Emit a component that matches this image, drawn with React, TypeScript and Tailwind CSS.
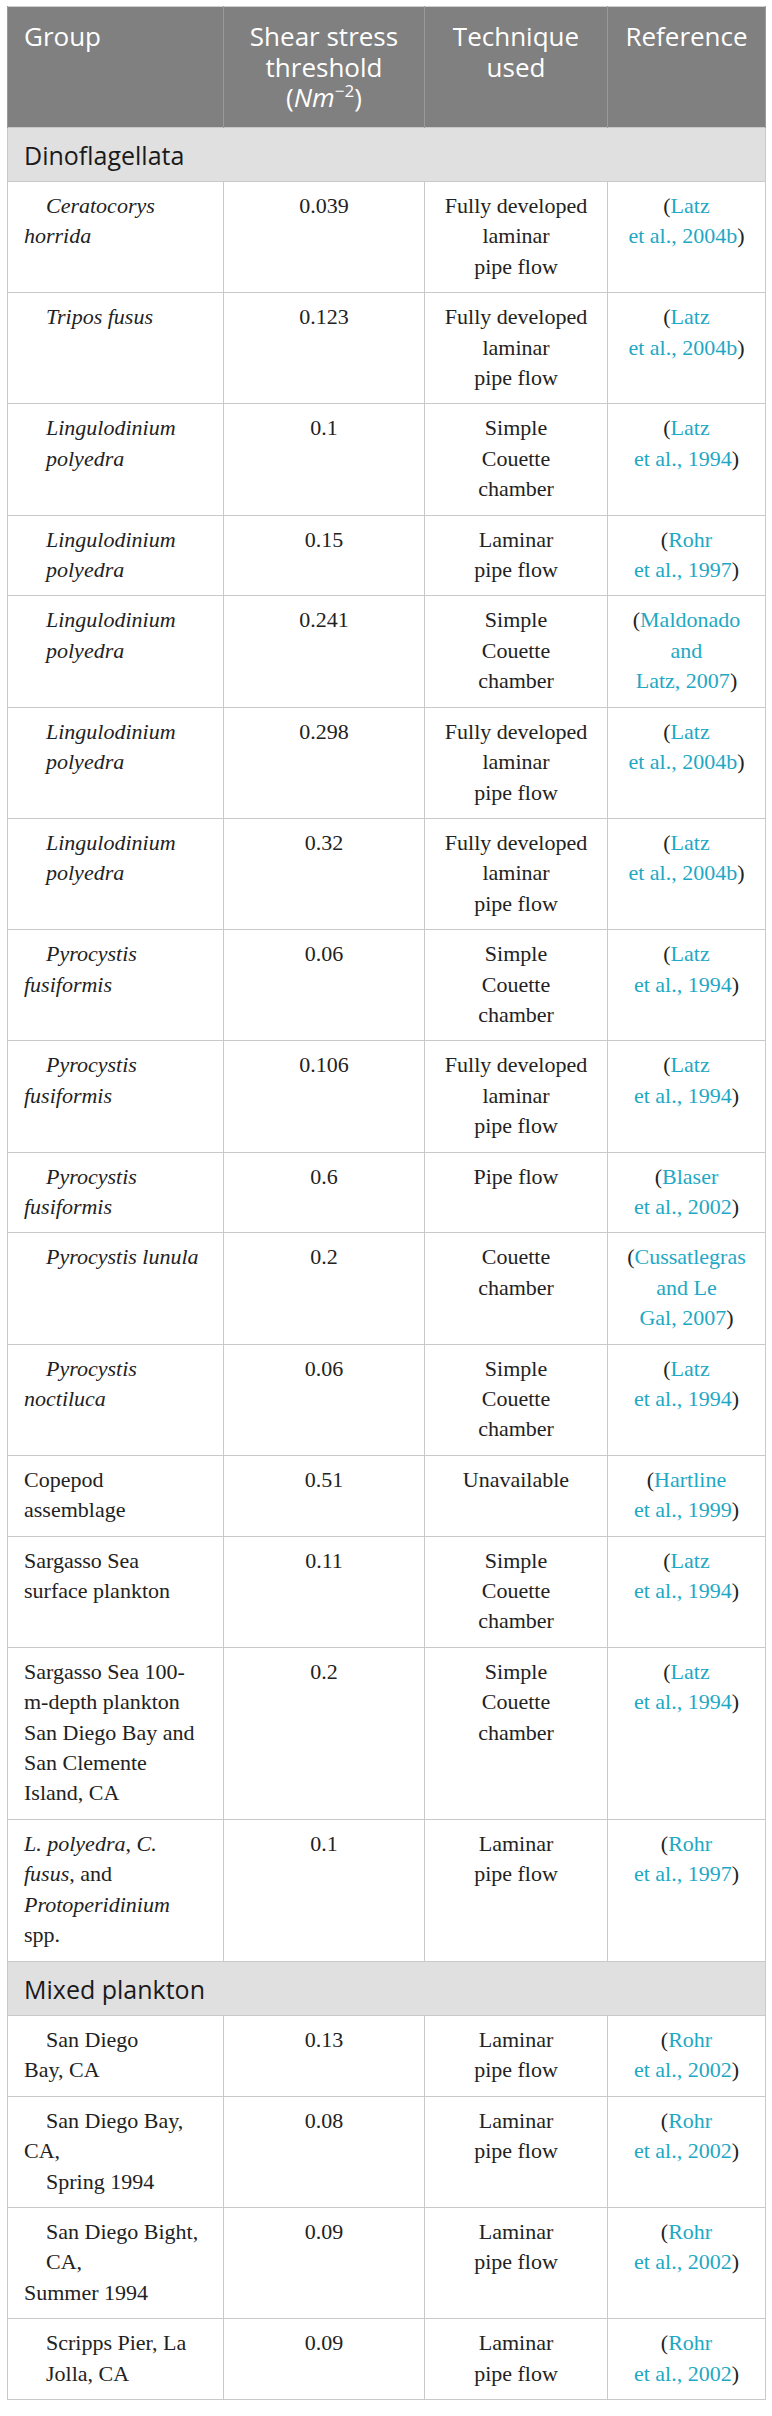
type Row = {
  group: React.ReactNode[];
  italic?: boolean;
  value: string;
  tech: string[];
  ref: string[];
};

const FDLPF = ["Fully developed", "laminar", "pipe flow"];
const SCC = ["Simple", "Couette", "chamber"];
const LPF = ["Laminar", "pipe flow"];
const LATZ04 = ["Latz", "et al., 2004b"];
const LATZ94 = ["Latz", "et al., 1994"];
const ROHR97 = ["Rohr", "et al., 1997"];
const ROHR02 = ["Rohr", "et al., 2002"];

// lines starting with ">" get the first-line indent
const dino: Row[] = [
  { group: [">Ceratocorys", "horrida"], italic: true, value: "0.039", tech: FDLPF, ref: LATZ04 },
  { group: [">Tripos fusus"], italic: true, value: "0.123", tech: FDLPF, ref: LATZ04 },
  { group: [">Lingulodinium", ">polyedra"], italic: true, value: "0.1", tech: SCC, ref: LATZ94 },
  { group: [">Lingulodinium", ">polyedra"], italic: true, value: "0.15", tech: LPF, ref: ROHR97 },
  { group: [">Lingulodinium", ">polyedra"], italic: true, value: "0.241", tech: SCC, ref: ["Maldonado", "and", "Latz, 2007"] },
  { group: [">Lingulodinium", ">polyedra"], italic: true, value: "0.298", tech: FDLPF, ref: LATZ04 },
  { group: [">Lingulodinium", ">polyedra"], italic: true, value: "0.32", tech: FDLPF, ref: LATZ04 },
  { group: [">Pyrocystis", "fusiformis"], italic: true, value: "0.06", tech: SCC, ref: LATZ94 },
  { group: [">Pyrocystis", "fusiformis"], italic: true, value: "0.106", tech: FDLPF, ref: LATZ94 },
  { group: [">Pyrocystis", "fusiformis"], italic: true, value: "0.6", tech: ["Pipe flow"], ref: ["Blaser", "et al., 2002"] },
  { group: [">Pyrocystis lunula"], italic: true, value: "0.2", tech: ["Couette", "chamber"], ref: ["Cussatlegras", "and Le", "Gal, 2007"] },
  { group: [">Pyrocystis", "noctiluca"], italic: true, value: "0.06", tech: SCC, ref: LATZ94 },
  { group: ["Copepod", "assemblage"], value: "0.51", tech: ["Unavailable"], ref: ["Hartline", "et al., 1999"] },
  { group: ["Sargasso Sea", "surface plankton"], value: "0.11", tech: SCC, ref: LATZ94 },
  {
    group: ["Sargasso Sea 100-", "m-depth plankton", "San Diego Bay and", "San Clemente", "Island, CA"],
    value: "0.2",
    tech: SCC,
    ref: LATZ94,
  },
  {
    group: [
      <>
        <i>L. polyedra</i>, <i>C.</i>
      </>,
      <>
        <i>fusus</i>, and
      </>,
      <i>Protoperidinium</i>,
      "spp.",
    ],
    value: "0.1",
    tech: LPF,
    ref: ROHR97,
  },
];

const mixed: Row[] = [
  { group: [">San Diego", "Bay, CA"], value: "0.13", tech: LPF, ref: ROHR02 },
  { group: [">San Diego Bay,", "CA,", ">Spring 1994"], value: "0.08", tech: LPF, ref: ROHR02 },
  { group: [">San Diego Bight,", ">CA,", "Summer 1994"], value: "0.09", tech: LPF, ref: ROHR02 },
  { group: [">Scripps Pier, La", ">Jolla, CA"], value: "0.09", tech: LPF, ref: ROHR02 },
];

function GroupLine({ line }: { line: React.ReactNode }) {
  if (typeof line === "string" && line.startsWith(">")) {
    return <div className="pl-[22px]">{line.slice(1)}</div>;
  }
  return <div>{line}</div>;
}

function RefCell({ lines }: { lines: string[] }) {
  return (
    <>
      {lines.map((l, i) => (
        <div key={i}>
          {i === 0 && <span className="text-[#222]">(</span>}
          <span className="text-[#1ea8c5]">{l}</span>
          {i === lines.length - 1 && <span className="text-[#222]">)</span>}
        </div>
      ))}
    </>
  );
}

function DataRow({ row }: { row: Row }) {
  const cell = "align-top border border-[#c9c9c9] pt-[9px] pb-[10px]";
  return (
    <tr>
      <td className={`${cell} pl-[16px] pr-1 ${row.italic ? "italic" : ""}`}>
        {row.group.map((g, i) => (
          <GroupLine key={i} line={g} />
        ))}
      </td>
      <td className={`${cell} text-center`}>{row.value}</td>
      <td className={`${cell} text-center`}>
        {row.tech.map((t, i) => (
          <div key={i}>{t}</div>
        ))}
      </td>
      <td className={`${cell} text-center`}>
        <RefCell lines={row.ref} />
      </td>
    </tr>
  );
}

function Band({ label }: { label: string }) {
  return (
    <tr>
      <td
        colSpan={4}
        className="bg-[#e0e0e0] border border-[#c9c9c9] pl-[16px] pt-[12px] pb-[11px] font-['Open_Sans',sans-serif] text-[25px] leading-[30.5px] text-[#1a1a1a]"
      >
        {label}
      </td>
    </tr>
  );
}

export default function App() {
  const head = "align-top bg-[#808080] border-x border-[#9a9a9a] pt-[14px] pb-[14px] font-normal";
  return (
    <div className="bg-white min-h-[2416px] pl-[7px] pr-[7px] pt-[6px]">
      <table className="w-[758px] table-fixed border-collapse border border-[#cfcfcf] font-['Liberation_Serif',serif] text-[22px] leading-[30.4px] text-[#222]">
        <colgroup>
          <col className="w-[216px]" />
          <col className="w-[201px]" />
          <col className="w-[183px]" />
          <col className="w-[158px]" />
        </colgroup>
        <thead>
          <tr className="font-['Open_Sans',sans-serif] text-[26px] leading-[30.5px] text-white">
            <th className={`${head} text-left pl-[16px]`}>Group</th>
            <th className={`${head} text-center`}>
              <div>Shear stress</div>
              <div>threshold</div>
              <div>
                (<i>Nm</i>
                <span className="relative -top-[10px] text-[17px] leading-none">−2</span>)
              </div>
            </th>
            <th className={`${head} text-center`}>
              <div>Technique</div>
              <div>used</div>
            </th>
            <th className={`${head} text-center`}>Reference</th>
          </tr>
        </thead>
        <tbody>
          <Band label="Dinoflagellata" />
          {dino.map((r, i) => (
            <DataRow key={i} row={r} />
          ))}
          <Band label="Mixed plankton" />
          {mixed.map((r, i) => (
            <DataRow key={i} row={r} />
          ))}
        </tbody>
      </table>
    </div>
  );
}
